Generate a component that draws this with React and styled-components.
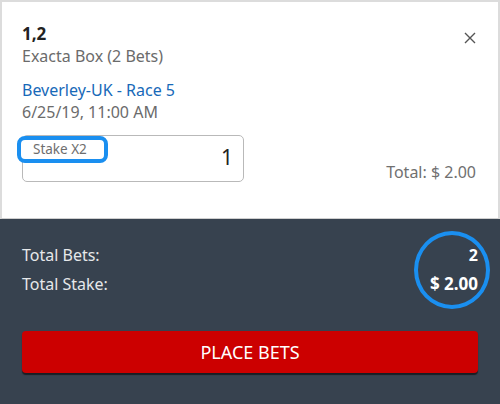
import styled, { createGlobalStyle } from "styled-components";

const Global = createGlobalStyle`
  html, body {
    margin: 0;
    padding: 0;
    width: 500px;
    height: 404px;
    overflow: hidden;
    font-family: "Noto Sans", Roboto, sans-serif;
  }
`;

const Page = styled.div`
  width: 500px;
  height: 404px;
  display: flex;
  flex-direction: column;
  background-color: #37424f;
`;

const Card = styled.div`
  position: relative;
  height: 219px;
  box-sizing: border-box;
  background-color: white;
  border: 2px solid #dcdcdc;
  border-bottom: 1px solid #cfcfcf;
  padding: 21px 20px 0 20px;
`;

const Close = styled.button`
  position: absolute;
  top: 28px;
  right: 20px;
  width: 16px;
  height: 16px;
  padding: 0;
  border: none;
  background: none;
  cursor: pointer;
`;

const Selection = styled.div`
  font-size: 17px;
  font-weight: 700;
  color: #222;
  line-height: 22px;
`;

const Sub = styled.div`
  font-size: 16px;
  color: #6b6b6b;
  line-height: 22px;
`;

const Event = styled.div`
  margin-top: 13px;
  font-size: 16px;
  color: #1769b8;
  line-height: 21px;
`;

const StakeRow = styled.div`
  margin-top: 12px;
  display: flex;
  align-items: flex-end;
  justify-content: space-between;
`;

const Field = styled.div`
  position: relative;
  width: 222px;
  height: 47px;
  box-sizing: border-box;
  border: 1px solid #b9b9b9;
  border-radius: 5px;
  display: flex;
  align-items: center;
  justify-content: flex-end;
  padding: 0 10px 4px 0;
  font-size: 21px;
  color: #222;
`;

const FieldLabel = styled.div`
  position: absolute;
  top: 0;
  left: -6px;
  width: 91px;
  height: 27px;
  box-sizing: border-box;
  border: 4px solid #1a8ff0;
  border-radius: 8px;
  background: white;
  font-size: 13.5px;
  color: #6e6e6e;
  padding-left: 12px;
  line-height: 18px;
`;

const LineTotal = styled.div`
  font-size: 16px;
  color: #707070;
  padding-right: 2px;
  line-height: 20px;
`;

const Summary = styled.div`
  position: relative;
  padding: 25px 22px 0 22px;
  display: grid;
  grid-template-columns: 1fr auto;
  row-gap: 6px;
  align-items: baseline;
  color: #e6e8ea;
`;

const SumLabel = styled.div`
  font-size: 16px;
`;

const SumValue = styled.div`
  font-weight: 700;
  font-size: ${(p) => (p.big ? "17px" : "16px")};
  color: white;
  text-align: right;
`;

const Ring = styled.div`
  position: absolute;
  top: 12px;
  right: 10px;
  width: 76px;
  height: 78px;
  box-sizing: border-box;
  border: 4px solid #1a8ff0;
  border-radius: 50%;
`;

const Footer = styled.div`
  padding: 36px 22px 0 22px;
`;

const PlaceButton = styled.button`
  width: 100%;
  height: 42px;
  border: none;
  border-radius: 4px;
  background-color: #cc0000;
  box-shadow: 0 2px 1px rgba(0, 0, 0, 0.55);
  color: white;
  font-family: inherit;
  font-size: 18px;
  cursor: pointer;
`;

const App = () => {
  return (
    <Page>
      <Global />
      <Card>
        <Close>
          <svg width="16" height="16" viewBox="0 0 16 16">
            <path d="M3 3 L13 13 M13 3 L3 13" stroke="#555" strokeWidth="1.4" />
          </svg>
        </Close>
        <Selection>1,2</Selection>
        <Sub>Exacta Box (2 Bets)</Sub>
        <Event>Beverley-UK - Race 5</Event>
        <Sub>6/25/19, 11:00 AM</Sub>
        <StakeRow>
          <Field>
            <FieldLabel>Stake X2</FieldLabel>1
          </Field>
          <LineTotal>Total: $ 2.00</LineTotal>
        </StakeRow>
      </Card>
      <Summary>
        <SumLabel>Total Bets:</SumLabel>
        <SumValue>2</SumValue>
        <SumLabel>Total Stake:</SumLabel>
        <SumValue big>$ 2.00</SumValue>
        <Ring />
      </Summary>
      <Footer>
        <PlaceButton>PLACE BETS</PlaceButton>
      </Footer>
    </Page>
  );
};

export default App;
